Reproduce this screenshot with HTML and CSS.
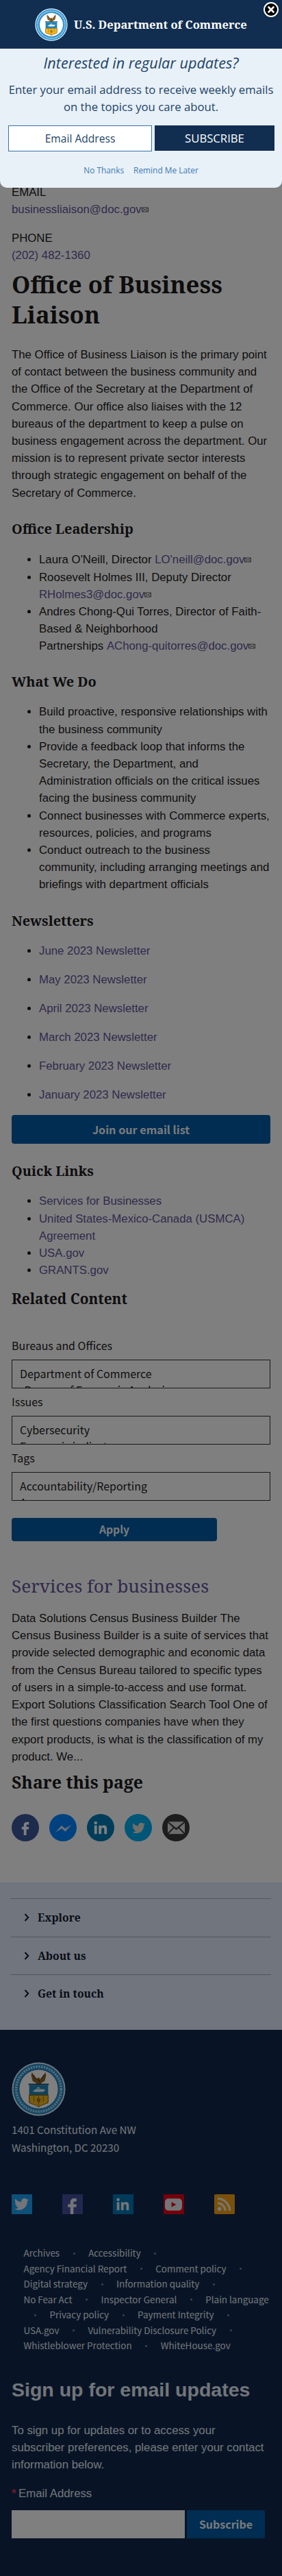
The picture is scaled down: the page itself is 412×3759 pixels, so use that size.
FILE: index.html
```html
<!DOCTYPE html>
<html lang="en">
<head>
<meta charset="utf-8">
<title>Office of Business Liaison</title>
<link rel="stylesheet" href="styles.css">
</head>
<body>
<svg class="defs" width="0" height="0" aria-hidden="true">
  <symbol id="seal" viewBox="0 0 80 80">
    <circle cx="40" cy="40" r="39.5" fill="#d9ecf8"/>
    <circle cx="40" cy="40" r="37.5" fill="#2b8fcb"/>
    <circle cx="40" cy="40" r="33.2" fill="none" stroke="#a9dcf3" stroke-width="3.4" stroke-dasharray="2.4 1.5"/>
    <circle cx="40" cy="40" r="29" fill="#fff" stroke="#2472ae" stroke-width="1"/>
    <path d="M30 15l5 8 4 2 1-3 2 3 3-2 5-8 1 5-2 8-5 3-1 3h-6l-1-3-5-3-2-8z" fill="#8a6526"/>
    <path d="M32 19l4 6m12-6l-4 6M38 24l4 6" stroke="#3f2b12" stroke-width="1.2" fill="none"/>
    <path d="M25 34h30v-2H25z" fill="#17496f"/>
    <path d="M26 34h28v15H26z" fill="#2084b6"/>
    <path d="M31 43l5-3h9l5 1-3 3H34z" fill="#e9f3f8"/>
    <path d="M36 39l4-2 2 2z" fill="#fff"/>
    <path d="M26 49h28v10c0 3-9 3-14 7-5-4-14-4-14-7z" fill="#f2b81c" stroke="#87611a" stroke-width="1.2"/>
    <path d="M40 50v14M33 50v9m14-9v9" stroke="#a87a1b" stroke-width="1.3"/>
    <path d="M37 54h6l-1 5h-4z" fill="#9b6d18"/>
  </symbol>
  <symbol id="mail" viewBox="0 0 10 8">
    <path d="M.5 1h9v6h-9z" fill="none" stroke="#555" stroke-width="1"/>
    <path d="M1 1.5l4 3 4-3M1 6.5l3-2.5m5 2.5L6 4" fill="none" stroke="#555" stroke-width=".9"/>
  </symbol>
  <symbol id="bird" viewBox="0 0 24 24"><path d="M23.953 4.57a10 10 0 01-2.825.775 4.958 4.958 0 002.163-2.723c-.951.555-2.005.959-3.127 1.184a4.92 4.92 0 00-8.384 4.482C7.69 8.095 4.067 6.13 1.64 3.162a4.822 4.822 0 00-.666 2.475c0 1.71.87 3.213 2.188 4.096a4.904 4.904 0 01-2.228-.616v.06a4.923 4.923 0 003.946 4.827 4.996 4.996 0 01-2.212.085 4.936 4.936 0 004.604 3.417 9.867 9.867 0 01-6.102 2.105c-.39 0-.779-.023-1.17-.067a13.995 13.995 0 007.557 2.209c9.053 0 13.998-7.496 13.998-13.985 0-.21 0-.42-.015-.63A9.935 9.935 0 0024 4.59z"/></symbol>
  <symbol id="linked" viewBox="0 0 24 24"><path d="M2 8.500h4.200V22H2zM9 8.500h4v1.900c.7-1.200 2-2.200 4.100-2.200 3.900 0 4.900 2.500 4.900 6.200V22h-4.200v-6.700c0-1.900-.4-3.400-2.200-3.400s-2.400 1.400-2.400 3.300V22H9z"/><circle cx="4.100" cy="4.300" r="2.500"/></symbol>
  <symbol id="face" viewBox="0 0 24 24"><path d="M18 2v4.200h-2.300c-1.500 0-1.900.7-1.900 1.900V10H18l-.5 4.200h-3.700V24H9.400v-9.800H6V10h3.400V7.400C9.400 3.900 11.500 2 14.700 2z"/></symbol>
</svg>

<main class="page">
  <section class="contact">
    <div>EMAIL</div>
    <div><a>businessliaison@doc.gov</a><svg class="mail"><use href="#mail"/></svg></div>
    <div class="phone">PHONE</div>
    <div><a>(202) 482-1360</a></div>
  </section>

  <h1>Office of Business Liaison</h1>
  <p>The Office of Business Liaison is the primary point of contact between the business community and the Office of the Secretary at the Department of Commerce. Our office also liaises with the 12 bureaus of the department to keep a pulse on business engagement across the department. Our mission is to represent private sector interests through strategic engagement on behalf of the Secretary of Commerce.</p>

  <h2 class="h-lead">Office Leadership</h2>
  <ul>
    <li>Laura O'Neill, Director <a>LO'neill@doc.gov</a><svg class="mail"><use href="#mail"/></svg></li>
    <li>Roosevelt Holmes III, Deputy Director <a>RHolmes3@doc.gov</a><svg class="mail"><use href="#mail"/></svg></li>
    <li>Andres Chong-Qui Torres, Director of Faith-Based &amp; Neighborhood Partnerships&nbsp;<a>AChong-quitorres@doc.gov</a><svg class="mail"><use href="#mail"/></svg></li>
  </ul>

  <h2 class="h-what">What We Do</h2>
  <ul>
    <li>Build proactive, responsive relationships with the business community</li>
    <li>Provide a feedback loop that informs the Secretary, the Department, and Administration officials on the critical issues facing the business community</li>
    <li>Connect businesses with Commerce experts, resources, policies, and programs</li>
    <li>Conduct outreach to the business community, including arranging meetings and briefings with department officials</li>
  </ul>

  <h2 class="h-news">Newsletters</h2>
  <ul class="spaced">
    <li><a>June 2023 Newsletter</a></li>
    <li><a>May 2023 Newsletter</a></li>
    <li><a>April 2023 Newsletter</a></li>
    <li><a>March 2023 Newsletter</a></li>
    <li><a>February 2023 Newsletter</a></li>
    <li><a>January 2023 Newsletter</a></li>
  </ul>
  <div class="btn join">Join our email list</div>

  <h2 class="h-quick">Quick Links</h2>
  <ul>
    <li><a>Services for Businesses</a></li>
    <li><a>United States-Mexico-Canada (USMCA) Agreement</a></li>
    <li><a>USA.gov</a></li>
    <li><a>GRANTS.gov</a></li>
  </ul>

  <h2 class="h-related">Related Content</h2>
  <form class="filters">
    <div class="label">Bureaus and Offices</div>
    <div class="select"><div>Department of Commerce</div><div class="child">-Bureau of Economic Analysis</div></div>
    <div class="label">Issues</div>
    <div class="select"><div>Cybersecurity</div><div>Economic indicators</div></div>
    <div class="label">Tags</div>
    <div class="select"><div>Accountability/Reporting</div><div>A</div></div>
    <div class="btn apply">Apply</div>
  </form>

  <h3 class="result"><a>Services for businesses</a></h3>
  <p>Data Solutions Census Business Builder The Census Business Builder is a suite of services that provide selected demographic and economic data from the Census Bureau tailored to specific types of users in a simple-to-access and use format. Export Solutions Classification Search Tool One of the first questions companies have when they export products, is what is the classification of my product. We...</p>

  <h2 class="h-share">Share this page</h2>
  <div class="share">
    <span class="round fb"><svg viewBox="0 0 24 24"><use href="#face"/></svg></span>
    <span class="round ms"><svg viewBox="0 0 24 24"><path d="M1 18L9.500 8.500l5 4.200L23.500 7.500 14.800 17l-5-4.300z"/></svg></span>
    <span class="round li"><svg viewBox="0 0 24 24"><use href="#linked"/></svg></span>
    <span class="round tw"><svg viewBox="0 0 24 24"><use href="#bird"/></svg></span>
    <span class="round em"><svg viewBox="0 0 24 18"><path d="M1 0h22L12 9zM0 1.500l7.500 6.800L0 16zM24 1.500l-7.500 6.800L24 16zM1.200 17.500l7.600-8 3.200 2.300 3.200-2.300 7.600 8z"/></svg></span>
  </div>
</main>

<nav class="links-nav">
  <div class="nav-item"><svg viewBox="0 0 8 12"><path d="M1.500 1l4.700 5-4.700 5"/></svg>Explore</div>
  <div class="nav-item"><svg viewBox="0 0 8 12"><path d="M1.500 1l4.700 5-4.700 5"/></svg>About us</div>
  <div class="nav-item"><svg viewBox="0 0 8 12"><path d="M1.500 1l4.700 5-4.700 5"/></svg>Get in touch</div>
</nav>

<footer class="footer">
  <svg class="seal-big"><use href="#seal"/></svg>
  <address>1401 Constitution Ave NW<br>Washington, DC 20230</address>
  <div class="social">
    <span class="sq s-tw"><svg viewBox="0 0 24 24"><use href="#bird"/></svg></span>
    <span class="sq s-fb"><svg viewBox="0 0 24 24"><use href="#face"/></svg></span>
    <span class="sq s-li"><svg viewBox="0 0 24 24"><use href="#linked"/></svg></span>
    <span class="sq s-yt"><svg viewBox="0 0 26 18"><rect width="26" height="18" rx="5"/><path class="play" d="M10 5l7 4-7 4z"/></svg></span>
    <span class="sq s-rs"><svg viewBox="0 0 20 20"><circle cx="3.500" cy="16.500" r="2.800"/><path class="wave" d="M1 8.500A10.500 10.500 0 0 1 11.500 19M1 2.300A16.700 16.700 0 0 1 17.700 19"/></svg></span>
  </div>
  <div class="policy">
    <div><span>Archives</span><i></i><span>Accessibility</span><i></i></div>
    <div><span>Agency Financial Report</span><i></i><span>Comment policy</span><i></i></div>
    <div><span>Digital strategy</span><i></i><span>Information quality</span><i></i></div>
    <div><span>No Fear Act</span><i></i><span>Inspector General</span><i></i><span>Plain language</span></div>
    <div class="lead-dot"><i></i><span>Privacy policy</span><i></i><span>Payment Integrity</span><i></i></div>
    <div><span>USA.gov</span><i></i><span>Vulnerability Disclosure Policy</span><i></i></div>
    <div><span>Whistleblower Protection</span><i></i><span>WhiteHouse.gov</span></div>
  </div>
  <h2 class="signup">Sign up for email updates</h2>
  <p>To sign up for updates or to access your subscriber preferences, please enter your contact information below.</p>
  <div class="email-label"><b>*</b>Email Address</div>
  <div class="signup-row"><div class="field"></div><div class="btn submit">Subscribe</div></div>
</footer>

<div class="overlay">
  <section class="popup">
    <header>
      <svg class="seal-small"><use href="#seal"/></svg>
      <span>U.S. Department of Commerce</span>
    </header>
    <h2>Interested in regular updates?</h2>
    <p>Enter your email address to receive weekly emails<br>on the topics you care about.</p>
    <div class="popup-form"><div class="popup-input">Email Address</div><div class="popup-btn">SUBSCRIBE</div></div>
    <div class="popup-links"><a>No Thanks</a><a>Remind Me Later</a></div>
    <svg class="close" viewBox="0 0 24 24"><circle cx="12" cy="12" r="10" fill="#000" stroke="#fff" stroke-width="2"/><path d="M8.500 8.500l7 7m0-7l-7 7" stroke="#fff" stroke-width="2.600" stroke-linecap="round"/></svg>
  </section>
</div>
</body>
</html>
```

FILE: styles.css
```css
* { box-sizing: border-box; }
body {
  margin: 0;
  position: relative;
  width: 412px;
  height: 3759px;
  overflow-x: hidden;
  background: #fff;
  color: #1b1b1b;
  font: 16.8px/25.2px "Liberation Sans", Arial, sans-serif;
}
.defs { display: block; }
h1, h2, h3, p, ul { margin: 0; }
h1, h2, h3 { font-family: "Noto Serif", "DejaVu Serif", serif; }
a { color: #635599; }

.page { height: 2747px; padding: 267.500px 17px 0; }
.phone { margin-top: 16.800px; }
h1 { margin-top: 7.500px; font-size: 34.700px; line-height: 44px; }
h1 + p { margin-top: 24.400px; }
.page h2 { font-size: 19.900px; line-height: 30px; }
ul { padding-left: 40px; }
.mail { display: inline-block; width: 10px; height: 8px; vertical-align: 1px; }
.spaced li + li { margin-top: 16.800px; }

.page .h-lead { margin: 25px 0 17.600px; }
.page .h-what { margin: 24px 0 16.800px; }
.page .h-news { margin: 25px 0 16.300px; }
.page .h-quick { margin: 24.500px 0 16.800px; }
.page .h-related { margin: 14px 0 0; font-size: 20.800px; }
.page .h-share { margin-top: 9.500px; font-size: 24.800px; }

.btn {
  display: flex;
  align-items: center;
  justify-content: center;
  border-radius: 4px;
  background: #005aa2;
  color: #f0f4fa;
  font-family: "Noto Sans CJK SC", sans-serif;
  font-weight: bold;
}
.join { height: 42px; margin-top: 17px; font-size: 16.200px; }
.filters { padding-top: 40.600px; font-family: "Noto Sans CJK SC", sans-serif; font-size: 15.950px; }
.label { height: 33px; line-height: 25px; }
.select { height: 42px; margin-bottom: 7px; padding: 8px 11px 0; overflow: hidden; border: 1px solid #333; line-height: 23.500px; }
.select .child { padding-left: 1px; }
.apply { width: 300px; height: 34px; margin-top: 25px; font-size: 15.700px; }

.result { margin: 48px 0 18px; font-size: 26.300px; line-height: 34px; font-weight: normal; }
.share { display: flex; gap: 15px; margin-top: 31.700px; }
.round { display: flex; align-items: center; justify-content: center; width: 40px; height: 40px; border-radius: 50%; }
.round svg { width: 22px; height: 22px; fill: #fff; }
.fb { background: #3b5998; }
.fb svg { height: 21px; }
.ms { background: #0084ff; }
.ms svg { width: 25px; height: 25px; fill: #d8dcf0; }
.li { background: #007bb5; }
.tw { background: #00aced; }
.tw svg { width: 19px; height: 19px; fill: #e5ded0; }
.em { background: #3a3a3a; }
.em svg { width: 25px; height: 19px; fill: #d8d8d8; }

.links-nav { height: 215px; padding: 23px 16px 0; background: #e2ebfd; }
.nav-item {
  display: flex;
  align-items: center;
  gap: 12px;
  height: 55.500px;
  padding-left: 19px;
  border-top: 1px solid #a3abb9;
  color: #10182a;
  font: bold 15.700px/20px "Noto Serif", "DejaVu Serif", serif;
}
.nav-item svg { width: 8px; height: 12px; fill: none; stroke: #10182a; stroke-width: 2; }

.footer { height: 797px; padding: 47px 17px 0; background: #10284c; color: #e4ebf4; }
.seal-big { display: block; width: 79px; height: 79px; }
address { margin-top: 6px; font: normal 15.200px/26px "Noto Sans CJK SC", sans-serif; }
.social { display: flex; gap: 44.500px; margin-top: 56px; }
.sq { display: flex; align-items: center; justify-content: center; width: 29.500px; height: 29px; }
.sq svg { width: 21px; height: 21px; fill: #e8eaf0; }
.s-tw { background: #1da1f2; }
.s-fb { background: #45519a; align-items: flex-end; }
.s-fb svg { width: 25px; height: 25px; }
.s-li { background: #0077b5; }
.s-yt { background: #e60012; }
.s-yt svg { width: 25px; height: 18px; }
.s-yt .play { fill: #e60012; }
.s-rs { background: #f5a112; border-radius: 2px; }
.s-rs .wave { fill: none; stroke: #f3ead8; stroke-width: 3; }

.policy { margin-top: 45px; padding-left: 17.500px; font: 13.440px/22.500px "Noto Sans CJK SC", sans-serif; }
.policy div { display: flex; align-items: center; gap: 19.500px; height: 22.500px; white-space: nowrap; }
.policy i { width: 3px; height: 3px; margin-top: 2px; border-radius: 50%; background: #7c8899; }
.policy .lead-dot { padding-left: 15.500px; }
.signup { margin: 36.500px 0 30px; font: bold 28.500px/34px "Liberation Sans", Arial, sans-serif; }
.email-label { margin-top: 16.800px; }
.email-label b { display: inline-block; width: 10px; color: #e0305c; }
.signup-row { display: flex; gap: 3px; margin-top: 11.400px; }
.field { width: 253px; height: 41px; background: #fff; }
.submit { width: 114px; height: 41px; border-radius: 0 3px 3px 0; font-size: 16px; }

.overlay { position: absolute; inset: 0; background: rgba(0, 0, 0, .5); }
.popup {
  position: relative;
  height: 274px;
  border-radius: 0 0 10px 10px;
  background: #e8f0f8;
  color: #1d4468;
  font-family: "Open Sans", "Noto Sans", sans-serif;
  text-align: center;
  overflow: hidden;
}
.popup header {
  display: flex;
  align-items: center;
  gap: 9px;
  height: 71px;
  padding-left: 51px;
  background: #112e51;
  color: #fff;
  font: bold 16.550px/24px "Noto Serif", "DejaVu Serif", serif;
}
.seal-small { width: 48px; height: 48px; }
.popup h2 { margin-top: 5px; font: italic 21.600px/32px "Open Sans", "Noto Sans", sans-serif; }
.popup p { margin-top: 9.500px; font-size: 16.700px; line-height: 25.200px; }
.popup-form { display: flex; gap: 4px; margin-top: 15px; padding: 0 11px 0 12px; }
.popup-input { width: 210px; height: 38px; border: 1px solid #3a71a8; background: #fff; font-size: 15.600px; line-height: 37px; }
.popup-btn { width: 175px; height: 37px; background: #112e51; color: #fff; font-size: 16.700px; line-height: 37px; }
.popup-links { display: flex; justify-content: center; gap: 14px; margin-top: 15.500px; font-size: 11.900px; }
.popup-links a { color: #3f7cb4; }
.close { position: absolute; top: 2px; right: 4px; width: 24px; height: 24px; }
```
